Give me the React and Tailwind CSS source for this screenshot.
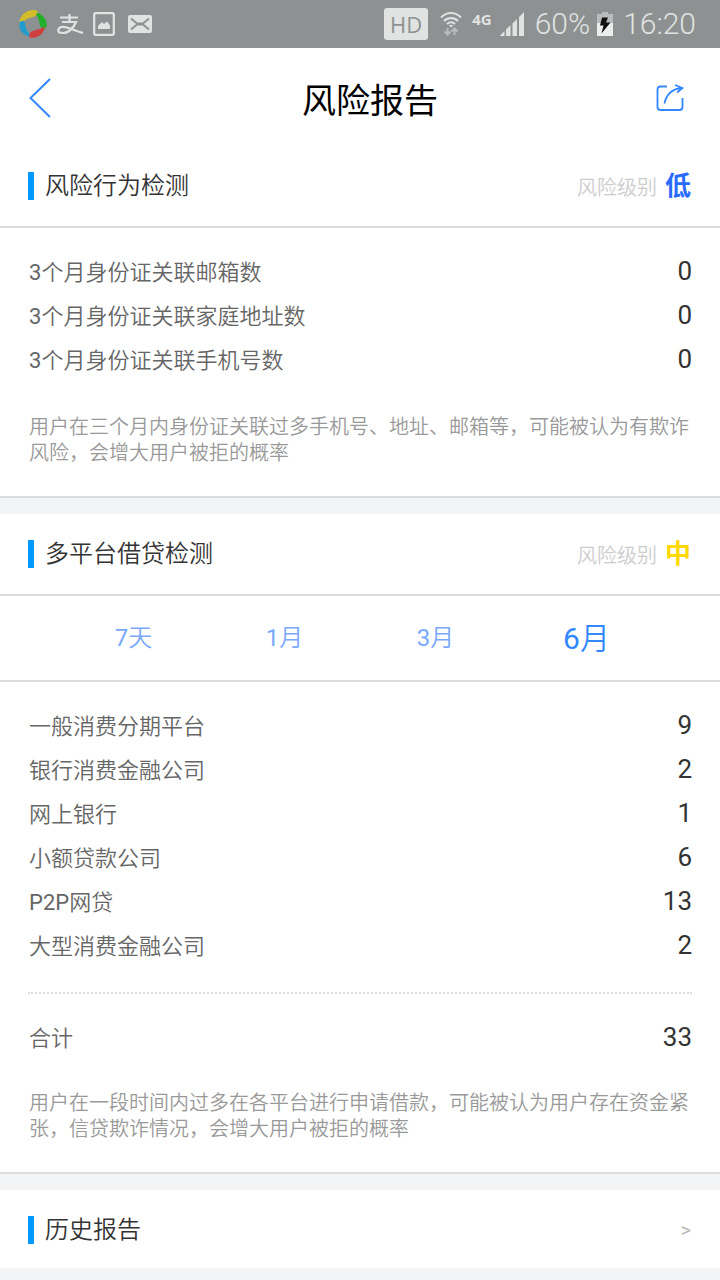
import React, { useState } from "react";

const behaviorRows = [
  { label: "3个月身份证关联邮箱数", value: 0 },
  { label: "3个月身份证关联家庭地址数", value: 0 },
  { label: "3个月身份证关联手机号数", value: 0 },
];

const loanRows = [
  { label: "一般消费分期平台", value: 9 },
  { label: "银行消费金融公司", value: 2 },
  { label: "网上银行", value: 1 },
  { label: "小额贷款公司", value: 6 },
  { label: "P2P网贷", value: 13 },
  { label: "大型消费金融公司", value: 2 },
];

const periods = ["7天", "1月", "3月", "6月"];

function StatusBar() {
  return (
    <div className="flex h-12 items-center justify-between bg-[#8d9191] pl-[19px] pr-6 text-[#e1e3e3]">
      <div className="flex items-center gap-[10px]">
        {/* Swirl app logo */}
        <svg className="size-7" viewBox="0 0 28 28">
          <path d="M.5 11C2 4 10-1.500 18 .5C19.500 3 18 6 14 7C9 8 7 9 3.500 12.500C1.500 14 .3 13 .5 11Z" fill="#d3bd2b" />
          <path d="M19 3C25 5 29 12 27.500 17C26 19 23 19 21.500 16.500C20 13 20.500 9 17.500 5.500C17 4 17.500 3 19 3Z" fill="#22b02b" />
          <path d="M25.500 18.500C24 25 17 29 10.500 27.500C9.500 25 10 23 13 21.500C17 19 20 20 24 17.500C26 17 26 17.500 25.500 18.500Z" fill="#cf3f3f" />
          <path d="M9.500 26.500C3 24 -.5 19 .5 13C2 10 5 10 6 13C7 17 6.500 19.500 10 23C10.500 25 10.500 26 9.500 26.500Z" fill="#229ccf" />
        </svg>
        {/* Wallet mark */}
        <svg className="h-7 w-[26px]" viewBox="0 0 26 28" fill="none" stroke="currentColor" strokeWidth="2.200">
          <path d="M3 7.500H21M12.500 4V12M5 12H19C17 17 12 23 6 23C2 23 .8 21.500 1.200 20C2 17 6 16.500 10 17.500C15 18.800 19 21 26 23" />
        </svg>
        <svg className="h-6 w-[22px]" viewBox="0 0 22 24">
          <rect x="1.200" y="1.200" width="19.600" height="21.600" rx="1.500" fill="none" stroke="currentColor" strokeWidth="2.200" />
          <path d="M5 17V14L9 10L11 12L14 9.500L17 13.500V17Z" fill="currentColor" />
        </svg>
        <svg className="ml-[3px] h-[18px] w-6" viewBox="0 0 24 18">
          <rect width="24" height="18" rx="2" fill="currentColor" />
          <path d="M3 3.500L9 8.500H15L21 3.500M3 14.500L9 9.500H15L21 14.500" fill="none" stroke="#8d9191" strokeWidth="1.800" />
        </svg>
      </div>
      <div className="flex items-center">
        <span className="flex h-8 w-11 items-center justify-center rounded-[3px] bg-[#e1e3e3] font-['Open_Sans'] text-[22px] font-normal text-[#8d9191]">
          HD
        </span>
        <svg className="ml-3 h-6 w-[22px]" viewBox="0 0 22 24" fill="none" stroke="currentColor" strokeWidth="2">
          <path d="M1 5.500C7-.5 15-.5 21 5.500M4 9C8 5 14 5 18 9M7 12C9.500 9.800 12.500 9.800 15 12" />
          <path d="M8.700 13L11 15.500L13.300 13Z" fill="currentColor" stroke="none" />
          <path d="M7.500 16V22M4.500 19.500L7.500 22.500L10.500 19.500M14.500 23V17M11.500 19.500L14.500 16.500L17.500 19.500" stroke="#b9bcbc" />
        </svg>
        <span className="ml-[10px] mb-[11px] font-['Open_Sans'] text-[15px] leading-4 font-bold">4G</span>
        <svg className="ml-2 size-6" viewBox="0 0 24 24" fill="currentColor">
          <path d="M0 24V23.500L4.500 19V24ZM6 24V17.500L10.500 13V24ZM12.500 24V11.500L17 7V24ZM19 24V5L24 0V24Z" />
        </svg>
        <span className="ml-[11px] text-[30px] leading-10">60%</span>
        <svg className="ml-[7px] h-6 w-4" viewBox="0 0 16 24">
          <path d="M5 0H11V2H16V11H0V2H5Z" fill="#b9bcbc" />
          <path d="M0 11H16V24H0Z" fill="#eceeee" />
          <path d="M5 5.500H11L9 10.500H13.500L4.500 21.500L6.500 13.500H3Z" fill="#111" />
        </svg>
        <span className="ml-[10px] text-[30px] leading-10">16:20</span>
      </div>
    </div>
  );
}

// Latin letters and digits take the regular weight, Chinese stays lighter
function MixedText({ text }) {
  return text
    .split(/([A-Z0-9]+)/)
    .map((part, i) => (i % 2 ? <span key={i} className="font-normal">{part}</span> : part));
}

function SectionTitle({ title, children }) {
  return (
    <div className="flex items-center justify-between px-7 pt-[26px]">
      <div className="flex items-center gap-[11px]">
        <span className="h-7 w-[6px] bg-[#0099ff]" />
        <h2 className="text-[24px] leading-7 text-[#333]">{title}</h2>
      </div>
      {children}
    </div>
  );
}

function RiskLevel({ level, color }) {
  return (
    <p className="flex h-7 items-baseline gap-2 pr-px text-[20px] leading-7 text-[#ccc]">
      风险级别
      <strong className={`text-[26px] font-bold ${color}`}>{level}</strong>
    </p>
  );
}

function Row({ label, value }) {
  return (
    <div className="flex h-11 items-center justify-between">
      <dt className="text-[22px] text-[#666]">
        <MixedText text={label} />
      </dt>
      <dd className="pb-[2px] text-[26px] font-normal text-[#333]">{value}</dd>
    </div>
  );
}

function Note({ children }) {
  return <p className="pl-px text-[20px] leading-[26px] text-[#999]">{children}</p>;
}

export default function App() {
  const [period, setPeriod] = useState("6月");
  const total = loanRows.reduce((sum, r) => sum + r.value, 0);

  return (
    <div lang="zh-CN" className="min-h-screen bg-[#f3f4f6] font-[Roboto,'Noto_Sans_CJK_SC',sans-serif] font-[350]">
      <StatusBar />

      <header className="grid h-[98px] grid-cols-[1fr_auto_1fr] items-center bg-white px-7 pt-[2px] text-[#3388ff]">
        <button type="button" aria-label="返回" className="justify-self-start">
          <svg className="h-10 w-6" viewBox="0 0 24 40" fill="none" stroke="currentColor" strokeWidth="2">
            <path d="M22 1L2.500 20L22 39" />
          </svg>
        </button>
        <h1 className="pt-[6px] pl-5 text-[34px] leading-10 font-normal text-black">风险报告</h1>
        <button type="button" aria-label="分享" className="justify-self-end pr-2">
          <svg className="size-7" viewBox="0 0 28 28" fill="none" stroke="currentColor" strokeWidth="1.800">
            <path d="M11 2.500H4.500Q1.500 2.500 1.500 5.500V23Q1.500 26 4.500 26H23.500Q26.500 26 26.500 23V14" />
            <path d="M8.500 19.500C10 11 16 4.500 26 4M19 1L26.500 4L21 8.500" />
          </svg>
        </button>
      </header>

      <section className="border-b-2 border-[#dcdddf] bg-white">
        <SectionTitle title="风险行为检测">
          <RiskLevel level="低" color="text-[#2a6cff]" />
        </SectionTitle>
        <div className="mt-[26px] border-t-2 border-[#dcdddf] px-7 pt-[22px] pb-[30px]">
          <dl className="pl-px">
            {behaviorRows.map((r) => (
              <Row key={r.label} label={r.label} value={r.value} />
            ))}
          </dl>
          <div className="pt-8">
            <Note>用户在三个月内身份证关联过多手机号、地址、邮箱等，可能被认为有欺诈风险，会增大用户被拒的概率</Note>
          </div>
        </div>
      </section>

      <section className="mt-4 border-b-2 border-[#dcdddf] bg-white">
        <SectionTitle title="多平台借贷检测">
          <RiskLevel level="中" color="text-[#ffd800]" />
        </SectionTitle>
        <div className="mt-[26px] grid h-[88px] grid-cols-4 border-y-2 border-[#dcdddf] px-[58px]">
          {periods.map((p) => (
            <button
              key={p}
              type="button"
              aria-pressed={p === period}
              onClick={() => setPeriod(p)}
              className={p === period ? "text-[30px] text-[#3388ff]" : "text-[24px] text-[#7aa8ff]"}
            >
              <MixedText text={p} />
            </button>
          ))}
        </div>
        <div className="px-7 pt-[22px] pb-[30px]">
          <dl className="pl-px">
            {loanRows.map((r) => (
              <Row key={r.label} label={r.label} value={r.value} />
            ))}
          </dl>
          <dl className="mt-6 border-t-2 border-dotted border-[#dcdddf] pt-[22px] pl-px">
            <Row label="合计" value={total} />
          </dl>
          <div className="pt-[30px]">
            <Note>用户在一段时间内过多在各平台进行申请借款，可能被认为用户存在资金紧张，信贷欺诈情况，会增大用户被拒的概率</Note>
          </div>
        </div>
      </section>

      <section className="mt-4 bg-white pb-6">
        <SectionTitle title="历史报告">
          <a href="#history" aria-label="查看历史报告" className="pr-px text-[20px] leading-7 font-normal text-[#bbb]">
            &gt;
          </a>
        </SectionTitle>
      </section>
    </div>
  );
}
